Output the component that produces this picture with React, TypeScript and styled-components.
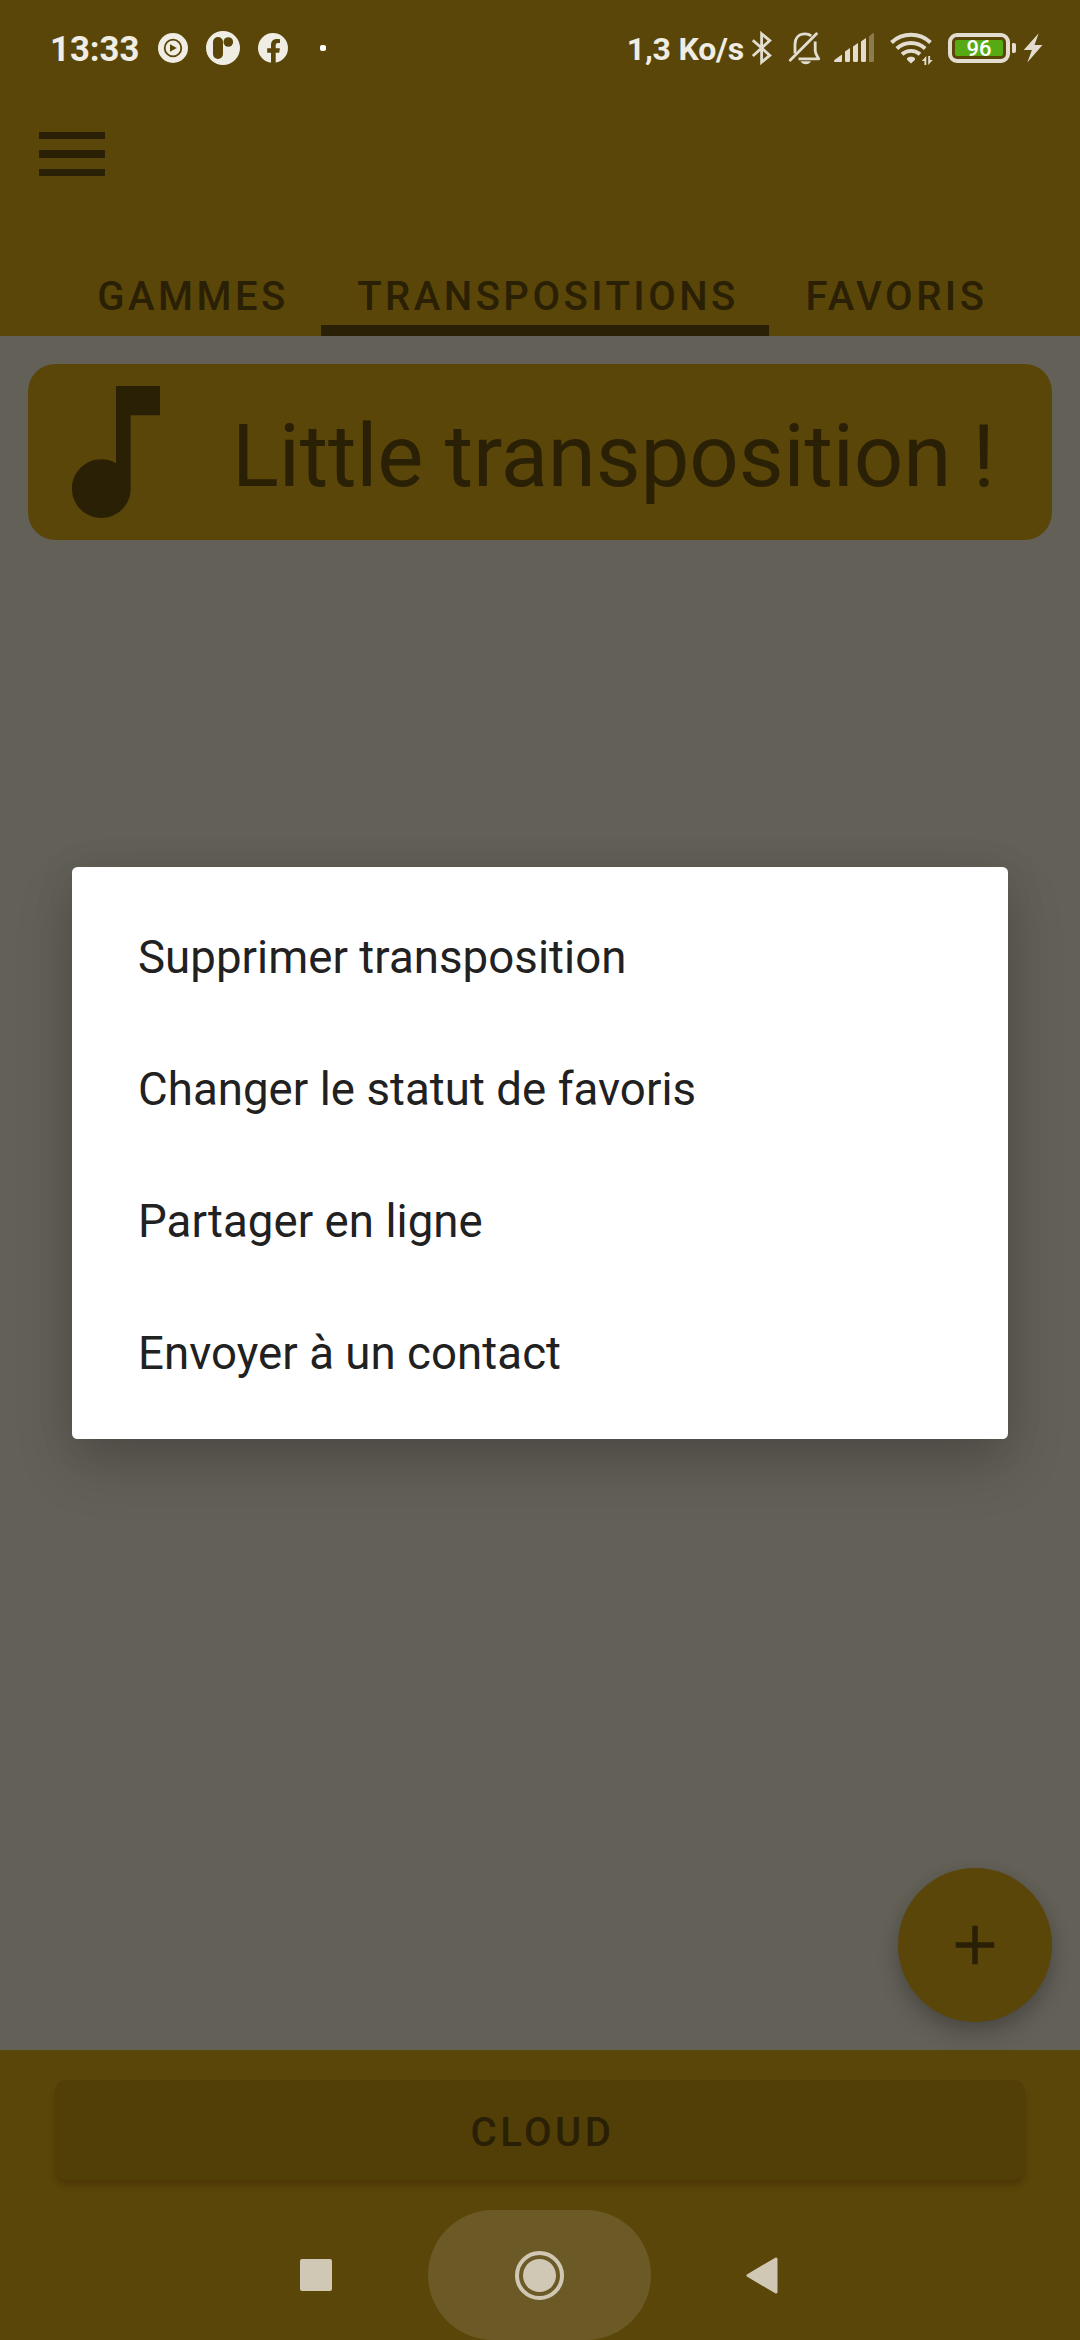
import React from "react";
import styled, { createGlobalStyle } from "styled-components";

const GOLD = "#5a4608";
const INK = "#2a2005";
const GREY = "#636058";
const LIGHT = "#e3ddcf";
const CREAM = "#f0ede4";
const NAV = "#d0c8b5";

const GlobalStyle = createGlobalStyle`
  *, *::before, *::after { box-sizing: border-box; }
  body { margin: 0; background: ${GREY}; }
  button { border: 0; padding: 0; background: none; font: inherit; color: inherit; text-align: left; }
  svg { display: block; flex: none; }
`;

const Screen = styled.div`
  position: relative;
  width: 1080px;
  height: 2340px;
  display: flex;
  flex-direction: column;
  background: ${GREY};
  color: ${INK};
  font-family: Roboto, "Noto Sans", sans-serif;
  overflow: hidden;
`;

const Header = styled.header`
  height: 336px;
  display: flex;
  flex-direction: column;
  background: ${GOLD};
`;

const StatusBar = styled.div`
  height: 96px;
  padding: 0 37px 0 50px;
  display: flex;
  justify-content: space-between;
  align-items: center;
  color: ${CREAM};
`;

const StatusGroup = styled.div`
  display: flex;
  align-items: center;
`;

const Slot = styled.span<{ $gap: number }>`
  display: flex;
  margin-left: ${(p) => p.$gap}px;
`;

const Clock = styled.span`
  width: 90px;
  padding-top: 2px;
  font-size: 34.7px;
  line-height: 40px;
  font-weight: 700;
  white-space: nowrap;
`;

const Speed = styled.span`
  padding-top: 1px;
  font-size: 32px;
  line-height: 40px;
  font-weight: 700;
  letter-spacing: -0.2px;
  white-space: nowrap;
`;

const MoreDot = styled.span`
  width: 6px;
  height: 6px;
  margin-left: 32px;
  border-radius: 2px;
  background: #fff;
`;

const Battery = styled.span`
  width: 62px;
  height: 30px;
  margin-left: 15px;
  padding: 3px;
  display: flex;
  border: 4px solid ${LIGHT};
  border-radius: 9px;
`;

const BatteryLevel = styled.span`
  flex: 1;
  padding-top: 2px;
  display: flex;
  align-items: center;
  justify-content: center;
  border-radius: 2px;
  background: #56ab14;
  color: #fff;
  font-size: 22px;
  line-height: 16px;
  font-weight: 500;
`;

const BatteryTip = styled.span`
  width: 4px;
  height: 10px;
  margin-left: 2px;
  border-radius: 1px 2px 2px 1px;
  background: ${LIGHT};
`;

const Toolbar = styled.div`
  height: 154px;
  padding: 36px 39px 0;
`;

const MenuButton = styled.button`
  width: 66px;
  display: flex;
  flex-direction: column;
  gap: 11px;
`;

const MenuBar = styled.span`
  height: 7.3px;
  background: ${INK};
`;

const Tabs = styled.nav`
  height: 86px;
  padding-left: 59px;
  display: flex;
`;

const Tab = styled.button<{ $width: number; $active?: boolean }>`
  width: ${(p) => p.$width}px;
  height: 86px;
  padding: 18px 0 0 6px;
  display: flex;
  justify-content: center;
  align-items: center;
  border-bottom: 11px solid ${(p) => (p.$active ? INK : "transparent")};
  font-size: 40px;
  font-weight: 500;
  letter-spacing: 3.5px;
  white-space: nowrap;
`;

const Content = styled.main`
  flex: 1;
  padding: 28px;
`;

const Card = styled.article`
  height: 176px;
  display: flex;
  align-items: center;
  border-radius: 27.5px;
  background: ${GOLD};
`;

const CardTitle = styled.h1`
  margin: 0 0 0 28px;
  padding-top: 7px;
  font-size: 87px;
  line-height: 104px;
  font-weight: 400;
  letter-spacing: -0.15px;
  white-space: nowrap;
`;

const Fab = styled.button`
  position: absolute;
  right: 28px;
  top: 1868px;
  width: 154px;
  height: 154px;
  display: flex;
  align-items: center;
  justify-content: center;
  border-radius: 50%;
  background: ${GOLD};
  box-shadow: 0 12px 22px rgba(0, 0, 0, 0.2), 0 2px 14px rgba(0, 0, 0, 0.08);
`;

const BottomBar = styled.footer`
  position: relative;
  height: 160px;
  padding: 30px 55px;
  background: ${GOLD};
`;

const CloudButton = styled.button`
  width: 970px;
  height: 100px;
  padding: 5px 0 0 5px;
  display: flex;
  align-items: center;
  justify-content: center;
  border-radius: 11px;
  background: #523e07;
  box-shadow: 0 6px 6px -1px rgba(50, 20, 0, 0.3);
  font-size: 40px;
  font-weight: 500;
  letter-spacing: 3.5px;
`;

const SystemNav = styled.nav`
  height: 130px;
  padding-right: 2px;
  display: flex;
  justify-content: center;
  background: ${GOLD};
`;

const NavButton = styled.button<{ $pressed?: boolean }>`
  width: 223px;
  height: 130px;
  display: flex;
  align-items: center;
  justify-content: center;
  border-radius: 65px;
  background: ${(p) => (p.$pressed ? "#6c5a26" : "transparent")};
`;

const Dialog = styled.div`
  position: absolute;
  left: 72px;
  top: 867px;
  width: 936px;
  height: 572px;
  padding: 22px 0;
  display: flex;
  flex-direction: column;
  border-radius: 5.5px;
  background: #fff;
  box-shadow: 0 26px 56px rgba(0, 0, 0, 0.18), 0 4px 40px rgba(0, 0, 0, 0.09);
`;

const DialogItem = styled.button`
  height: 132px;
  padding: 5px 66px 0;
  display: flex;
  align-items: center;
  color: #212121;
  font-size: 45.6px;
  line-height: 52px;
  letter-spacing: 0.05px;
  white-space: nowrap;
`;

const MusicAppIcon = () => (
  <svg width="30" height="30" viewBox="0 0 30 30">
    <circle cx="15" cy="15" r="15" fill={CREAM} />
    <circle cx="15" cy="15" r="8.3" fill="none" stroke={GOLD} strokeWidth="1.8" />
    <path d="M12 11.2v7.6l6.8-3.8z" fill={GOLD} />
  </svg>
);

const RoundAppIcon = () => (
  <svg width="34" height="34" viewBox="0 0 34 34">
    <circle cx="17" cy="17" r="17" fill={CREAM} />
    <rect x="7" y="6" width="10" height="22" rx="5" fill={GOLD} />
    <circle cx="22.3" cy="11" r="4.8" fill={GOLD} />
  </svg>
);

const FacebookIcon = () => (
  <svg width="30" height="30" viewBox="0 0 30 30">
    <circle cx="15" cy="15" r="15" fill={CREAM} />
    <path
      d="M13 30.5V19.7H9.2v-4.5H13v-3.3c0-3.9 2.3-6 5.9-6 1.1 0 2.1.1 3.1.3v3.7h-1.9c-1.9 0-2.4 1.1-2.4 2.3v3h4.2l-.7 4.5h-3.5v10.8z"
      fill={GOLD}
    />
  </svg>
);

const BluetoothIcon = () => (
  <svg width="22" height="34" viewBox="0 0 22 34" fill="none" stroke={LIGHT} strokeWidth="2.8">
    <path d="M1.8 9.2 18.8 24.4 10.6 31.2V2.8l8.2 6.8L1.8 25" />
  </svg>
);

const MutedBellIcon = () => (
  <svg width="34" height="34" viewBox="0 0 34 34" fill="none" stroke={LIGHT} strokeWidth="2.8">
    <path d="M7 22.5V13.5C7 7 11 2.900 17 2.900c2.700 0 4.700.8 6.200 2" />
    <path d="M27.2 10.5v8.5c0 3.5 1.800 6 3.600 8.800H10.5" strokeLinejoin="round" />
    <path d="M2.2 29.3 28.5 2.8" strokeLinecap="round" />
    <path d="M12.5 30.3h10.5c-1 1.900-3 2.900-5.200 2.900s-4.300-1-5.300-2.900z" fill={LIGHT} stroke="none" />
  </svg>
);

const SignalIcon = () => (
  <svg width="40" height="30" viewBox="0 0 40 30" fill={LIGHT}>
    <path d="M.5 29q-1-1.300.5-2.400L8 21.500V28a1 1 0 0 1-1 1z" />
    <path d="M11 18.500 16 15v12.500a1.500 1.500 0 0 1-1.500 1.500h-2a1.500 1.500 0 0 1-1.500-1.500z" />
    <path d="M19 13.500 24 10v17.500a1.500 1.500 0 0 1-1.500 1.500h-2a1.500 1.500 0 0 1-1.500-1.500z" />
    <path d="M27 8.500 32 5v22.500a1.500 1.500 0 0 1-1.500 1.500h-2a1.500 1.500 0 0 1-1.500-1.500z" />
    <path d="M35 3.500 38.500.4Q40-.6 40 1v26.500a1.500 1.500 0 0 1-1.500 1.500H35z" opacity=".36" />
  </svg>
);

const WifiIcon = () => (
  <svg width="43" height="34" viewBox="0 0 43 34" fill="none" stroke={LIGHT} strokeWidth="3.9">
    <path d="M1.500 11.500a28.500 28.500 0 0 1 39 0" />
    <path d="M6.800 17.500a21 21 0 0 1 28.400 0" />
    <path d="M12 23.300a13.500 13.500 0 0 1 18 0" />
    <path d="M17 27.200c2.200-1.900 5.800-1.900 8 0v1.600l-4 3.600-4-3.600z" fill={LIGHT} stroke="none" />
    <path d="M36.300 25v9h-1.900v-4h-2.600zM38.200 34v-9h1.900v4h2.600z" fill={LIGHT} stroke="none" />
  </svg>
);

const BoltIcon = () => (
  <svg width="20" height="30" viewBox="0 0 20 30" fill={LIGHT}>
    <path d="M15.700.3.700 17h8.200L4.300 29.500 19.500 12h-8z" />
  </svg>
);

const NoteIcon = () => (
  <svg width="176" height="176" viewBox="0 0 24 24" fill={INK}>
    <path d="M12 3v10.550c-.59-.34-1.270-.55-2-.55-2.210 0-4 1.790-4 4s1.790 4 4 4 4-1.790 4-4V7h4V3h-6z" />
  </svg>
);

const PlusIcon = () => (
  <svg width="66" height="66" viewBox="0 0 24 24" fill={INK}>
    <path d="M19 13h-6v6h-2v-6H5v-2h6V5h2v6h6z" />
  </svg>
);

const RecentsIcon = () => (
  <svg width="32" height="32" viewBox="0 0 32 32">
    <rect width="32" height="32" rx="2" fill={NAV} />
  </svg>
);

const HomeIcon = () => (
  <svg width="49" height="49" viewBox="0 0 49 49">
    <circle cx="24.500" cy="24.500" r="22.500" fill="none" stroke={NAV} strokeWidth="4" />
    <circle cx="24.500" cy="24.500" r="16.500" fill={NAV} />
  </svg>
);

const BackIcon = () => (
  <svg width="32" height="37" viewBox="0 0 32 37">
    <path
      d="M2 18.500 30 2v33z"
      fill={NAV}
      stroke={NAV}
      strokeWidth="3"
      strokeLinejoin="round"
    />
  </svg>
);

const TABS = [
  { label: "GAMMES", width: 262 },
  { label: "TRANSPOSITIONS", width: 448, active: true },
  { label: "FAVORIS", width: 249 },
];

const ACTIONS = [
  "Supprimer transposition",
  "Changer le statut de favoris",
  "Partager en ligne",
  "Envoyer à un contact",
];

export default function App() {
  return (
    <Screen>
      <GlobalStyle />
      <Header>
        <StatusBar>
          <StatusGroup>
            <Clock>13:33</Clock>
            <Slot $gap={18}><MusicAppIcon /></Slot>
            <Slot $gap={18}><RoundAppIcon /></Slot>
            <Slot $gap={18}><FacebookIcon /></Slot>
            <MoreDot />
          </StatusGroup>
          <StatusGroup>
            <Speed>1,3 Ko/s</Speed>
            <Slot $gap={7}><BluetoothIcon /></Slot>
            <Slot $gap={15}><MutedBellIcon /></Slot>
            <Slot $gap={12}><SignalIcon /></Slot>
            <Slot $gap={16}><WifiIcon /></Slot>
            <Battery>
              <BatteryLevel>96</BatteryLevel>
            </Battery>
            <BatteryTip />
            <Slot $gap={7}><BoltIcon /></Slot>
          </StatusGroup>
        </StatusBar>
        <Toolbar>
          <MenuButton aria-label="Menu">
            <MenuBar />
            <MenuBar />
            <MenuBar />
          </MenuButton>
        </Toolbar>
        <Tabs>
          {TABS.map((tab) => (
            <Tab key={tab.label} $width={tab.width} $active={tab.active}>
              {tab.label}
            </Tab>
          ))}
        </Tabs>
      </Header>
      <Content>
        <Card>
          <NoteIcon />
          <CardTitle>Little transposition !</CardTitle>
        </Card>
      </Content>
      <Fab aria-label="Ajouter">
        <PlusIcon />
      </Fab>
      <BottomBar>
        <CloudButton>CLOUD</CloudButton>
      </BottomBar>
      <SystemNav>
        <NavButton><RecentsIcon /></NavButton>
        <NavButton $pressed><HomeIcon /></NavButton>
        <NavButton><BackIcon /></NavButton>
      </SystemNav>
      <Dialog role="dialog">
        {ACTIONS.map((action) => (
          <DialogItem key={action}>{action}</DialogItem>
        ))}
      </Dialog>
    </Screen>
  );
}
